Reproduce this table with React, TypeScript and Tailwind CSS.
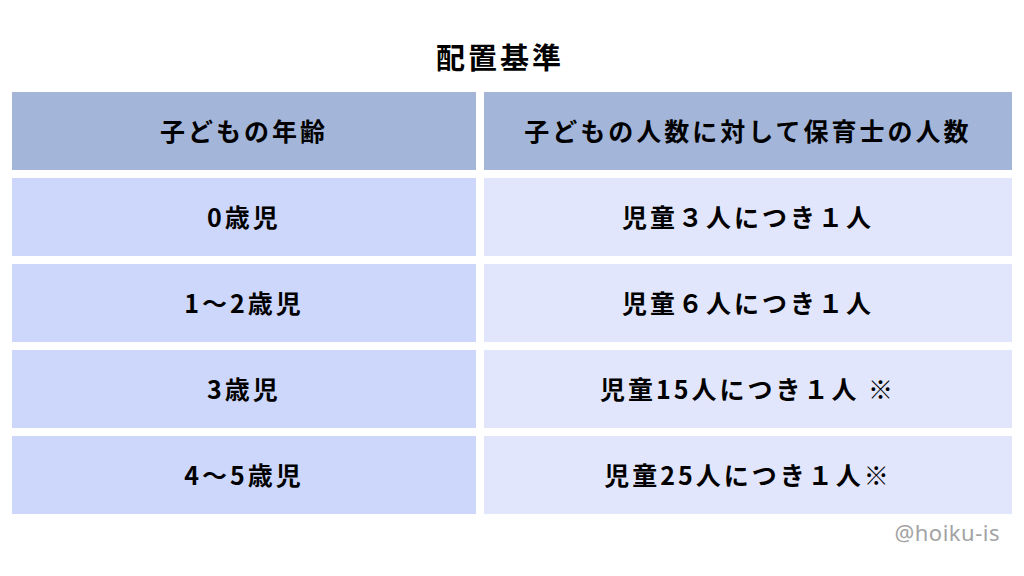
const rows = [
  { age: "0歳児", ratio: "児童３人につき１人" },
  { age: "1〜2歳児", ratio: "児童６人につき１人" },
  { age: "3歳児", ratio: "児童15人につき１人 ※" },
  { age: "4〜5歳児", ratio: "児童25人につき１人※" },
];

export default function App() {
  return (
    <div
      className="w-[1024px] h-[576px] bg-white flex flex-col text-black"
      style={{ fontFamily: '"Noto Sans CJK JP", "Noto Sans", sans-serif' }}
    >
      <h1 className="h-[92px] pt-[34px] text-center text-[29px] leading-[44px] font-bold tracking-[3px] pr-[24px]">
        配置基準
      </h1>
      <div className="mx-[12px] grid grid-cols-[464px_528px] gap-[8px] text-[25px] font-bold tracking-[3px]">
        <div className="h-[78px] bg-[#a3b5d8] flex items-center justify-center">
          子どもの年齢
        </div>
        <div className="h-[78px] bg-[#a3b5d8] flex items-center justify-center">
          子どもの人数に対して保育士の人数
        </div>
        {rows.map((r) => (
          <>
            <div
              key={r.age}
              className="h-[78px] bg-[#cdd6fb] flex items-center justify-center"
            >
              {r.age}
            </div>
            <div
              key={r.ratio}
              className="h-[78px] bg-[#e2e6fc] flex items-center justify-center"
            >
              {r.ratio}
            </div>
          </>
        ))}
      </div>
      <div
        className="mr-[24px] mt-[2px] text-right text-[22px] text-[#a3a3a3] tracking-[0.5px]"
        style={{ fontFamily: '"Noto Sans", sans-serif' }}
      >
        @hoiku-is
      </div>
    </div>
  );
}
